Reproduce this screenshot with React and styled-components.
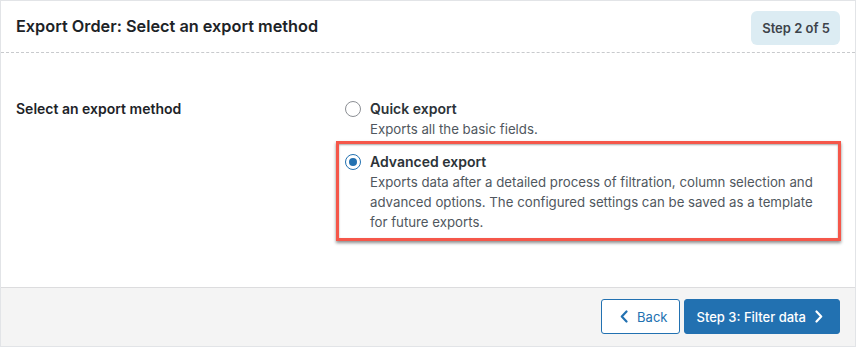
import React from 'react'
import styled, { createGlobalStyle } from 'styled-components';

const Global = createGlobalStyle`
  body {
    margin: 0;
    background: #fff;
    font-family: Inter, "Liberation Sans", sans-serif;
    color: #1d2327;
  }
`

const Panel = styled.div`
  width: 856px;
  height: 347px;
  box-sizing: border-box;
  border: 1px solid #e2e4e7;
  display: flex;
  flex-direction: column;
  background: #fff;
`

const Header = styled.div`
  height: 52px;
  box-sizing: border-box;
  border-bottom: 1px dashed #c8cacd;
  display: flex;
  align-items: center;
  justify-content: space-between;
  padding: 0 15px 0 15px;
`

const Title = styled.h2`
  margin: 0;
  font-size: 16.3px;
  font-weight: 600;
  color: #1d2327;
  margin-top: -1px;
`

const Badge = styled.div`
  background: #dcecf3;
  border-radius: 6px;
  height: 34px;
  padding: 0 10px 0 11px;
  display: flex;
  align-items: center;
  font-size: 13px;
  font-weight: 600;
  color: #3c434a;
  margin-top: 2px;
`

const Body = styled.div`
  flex: 1;
  display: grid;
  grid-template-columns: 320px 1fr;
  padding: 46px 14px 0 15px;
`

const FieldLabel = styled.div`
  font-size: 14px;
  font-weight: 600;
  line-height: 20px;
`

const Options = styled.div`
  display: flex;
  flex-direction: column;
`

const Option = styled.label`
  display: flex;
  gap: 9px;
  align-items: flex-start;
  padding: ${p => p.highlight ? '8px 6px 6px 6px' : '0 6px 2px 9px'};
  border: ${p => p.highlight ? '3px solid #f5574a' : 'none'};
  box-shadow: ${p => p.highlight ? '0 2px 3px rgba(0,0,0,0.45), inset 0 1px 2px rgba(0,0,0,0.35)' : 'none'};
`

const Radio = styled.span`
  flex: none;
  width: 16px;
  height: 16px;
  box-sizing: border-box;
  border-radius: 50%;
  border: 1px solid ${p => p.checked ? '#2271b1' : '#8c8f94'};
  background: #fff;
  margin-top: 2px;
  display: flex;
  align-items: center;
  justify-content: center;
  &::after {
    content: '';
    width: 8px;
    height: 8px;
    border-radius: 50%;
    background: ${p => p.checked ? '#2271b1' : 'transparent'};
  }
`

const OptionText = styled.div`
  display: flex;
  flex-direction: column;
`

const OptionTitle = styled.div`
  font-size: 14px;
  font-weight: 600;
  line-height: 20px;
  color: #2c3338;
`

const OptionDesc = styled.div`
  font-size: 13.25px;
  line-height: 20px;
  color: #50575e;
  max-width: 450px;
`

const Footer = styled.div`
  height: 59px;
  box-sizing: border-box;
  border-top: 1px solid #dcdcde;
  background: #f4f4f4;
  display: flex;
  justify-content: flex-end;
  align-items: flex-start;
  gap: 4px;
  padding: 11px 15px 0 0;
`

const Button = styled.button`
  height: 35px;
  margin: 0;
  box-sizing: border-box;
  border-radius: 3px;
  border: 1px solid #2271b1;
  background: ${p => p.primary ? '#2271b1' : '#fff'};
  color: ${p => p.primary ? '#fff' : '#2271b1'};
  font-family: Inter, "Liberation Sans", sans-serif;
  font-size: 13px;
  font-weight: ${p => p.primary ? 500 : 400};
  display: flex;
  align-items: center;
  gap: ${p => p.primary ? '9px' : '9px'};
  padding: ${p => p.primary ? '0 16px 0 11px' : '0 12px 0 18px'};
  cursor: pointer;
`

const Chevron = ({ dir }) => (
  <svg width="8" height="13" viewBox="0 0 8 13" fill="none">
    <path
      d={dir === 'left' ? 'M6.5 1.5 L1.8 6.5 L6.5 11.5' : 'M1.5 1.5 L6.2 6.5 L1.5 11.5'}
      stroke="currentColor"
      strokeWidth="2.2"
      strokeLinecap="round"
      strokeLinejoin="round"
    />
  </svg>
)

const App = () => {
  return <>
    <Global />
    <Panel>
      <Header>
        <Title>Export Order: Select an export method</Title>
        <Badge>Step 2 of 5</Badge>
      </Header>
      <Body>
        <FieldLabel>Select an export method</FieldLabel>
        <Options>
          <Option>
            <Radio />
            <OptionText>
              <OptionTitle>Quick export</OptionTitle>
              <OptionDesc>Exports all the basic fields.</OptionDesc>
            </OptionText>
          </Option>
          <Option highlight>
            <Radio checked />
            <OptionText>
              <OptionTitle>Advanced export</OptionTitle>
              <OptionDesc>
                Exports data after a detailed process of filtration, column selection and
                advanced options. The configured settings can be saved as a template
                for future exports.
              </OptionDesc>
            </OptionText>
          </Option>
        </Options>
      </Body>
      <Footer>
        <Button><Chevron dir="left" />Back</Button>
        <Button primary>Step 3: Filter data<Chevron dir="right" /></Button>
      </Footer>
    </Panel>
  </>
}

export default App;
